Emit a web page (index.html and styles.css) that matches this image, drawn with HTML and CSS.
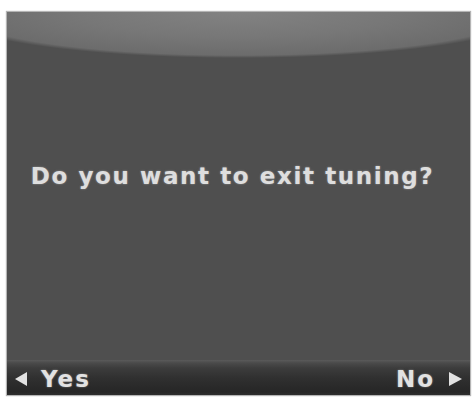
FILE: index.html
```html
<!DOCTYPE html>
<html>
<head>
<meta charset="utf-8">
<link rel="stylesheet" href="styles.css">
</head>
<body>
<div class="screen">
  <div class="message">Do you want to exit tuning?</div>
  <div class="footer">
    <div class="softkey"><span class="tri tri-left"></span><span>Yes</span></div>
    <div class="softkey"><span>No</span><span class="tri tri-right"></span></div>
  </div>
</div>
</body>
</html>
```
FILE: styles.css
```css
html, body {
  margin: 0;
  padding: 0;
  background: #ffffff;
}
body {
  width: 476px;
  height: 401px;
  overflow: hidden;
  font-family: "DejaVu Sans", Verdana, sans-serif;
}
.screen {
  margin: 12px 0 0 7px;
  width: 463px;
  height: 383px;
  display: flex;
  flex-direction: column;
  background:
    radial-gradient(296px 46px at 50% 0, #828282 0%, #777777 55%, #6c6c6c 94%, #4f4f4f 100%),
    #4f4f4f;
  background-repeat: no-repeat;
  box-shadow: 0 0 1px 1px rgba(40,40,40,0.35);
}
.message {
  flex: 1;
  display: flex;
  align-items: center;
  justify-content: center;
  padding: 0 12px 20px 0;
  color: #dedede;
  font-weight: bold;
  font-size: 23px;
  letter-spacing: 1.6px;
  text-shadow: 0 0 2px rgba(230,230,230,0.5);
}
.footer {
  height: 35px;
  display: flex;
  justify-content: space-between;
  align-items: center;
  padding: 2px 8px 0 8px;
  box-sizing: border-box;
  background: linear-gradient(#5a5a5a 0px, #4a4a4a 3px, #3c3c3c 8px, #303030 18px, #262626 32px, #2e2e2e 35px);
  color: #e2e2e2;
  font-weight: bold;
  font-size: 23px;
  letter-spacing: 2px;
  text-shadow: 0 0 2px rgba(230,230,230,0.5);
}
.softkey {
  display: flex;
  align-items: center;
  gap: 14px;
}
.tri {
  width: 0;
  height: 0;
  border-top: 7px solid transparent;
  border-bottom: 7px solid transparent;
}
.tri-left {
  border-right: 12px solid #e2e2e2;
}
.tri-right {
  border-left: 13px solid #e2e2e2;
}
```
